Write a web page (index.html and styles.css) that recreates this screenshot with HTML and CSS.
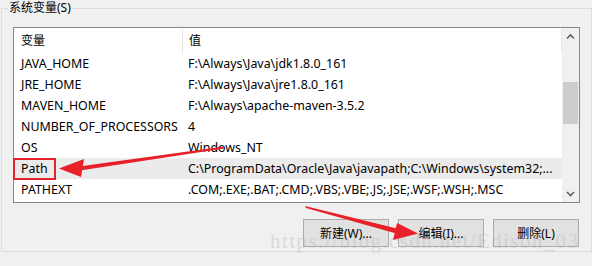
FILE: index.html
```html
<!DOCTYPE html>
<html lang="zh-CN">
<head>
    <meta charset="UTF-8">
    <meta name="viewport" content="width=device-width, initial-scale=1.0">
    <title>系统变量</title>
    <link rel="stylesheet" href="styles.css">
</head>
<body>
    <fieldset class="grupo">
        <legend>系统变量(S)</legend>
        <div class="lista">
            <div class="tabla">
                <div class="cabecera">
                    <div class="col-nombre">变量</div>
                    <div class="col-valor">值</div>
                </div>
                <div class="fila"><div class="col-nombre">JAVA_HOME</div><div class="col-valor">F:\Always\Java\jdk1.8.0_161</div></div>
                <div class="fila"><div class="col-nombre">JRE_HOME</div><div class="col-valor">F:\Always\Java\jre1.8.0_161</div></div>
                <div class="fila"><div class="col-nombre">MAVEN_HOME</div><div class="col-valor">F:\Always\apache-maven-3.5.2</div></div>
                <div class="fila"><div class="col-nombre">NUMBER_OF_PROCESSORS</div><div class="col-valor">4</div></div>
                <div class="fila"><div class="col-nombre">OS</div><div class="col-valor">Windows_NT</div></div>
                <div class="fila activa"><div class="col-nombre"><span class="marcado">Path</span></div><div class="col-valor">C:\ProgramData\Oracle\Java\javapath;C:\Windows\system32;...</div></div>
                <div class="fila"><div class="col-nombre">PATHEXT</div><div class="col-valor">.COM;.EXE;.BAT;.CMD;.VBS;.VBE;.JS;.JSE;.WSF;.WSH;.MSC</div></div>
            </div>
            <div class="scroll">
                <svg class="flecha" width="17" height="17" viewBox="0 0 17 17"><path d="M5 10.5 L8.5 7 L12 10.5" fill="none" stroke="#606060" stroke-width="1.6"/></svg>
                <div class="pista"><div class="pulgar"></div></div>
                <svg class="flecha" width="17" height="17" viewBox="0 0 17 17"><path d="M5 7 L8.5 10.5 L12 7" fill="none" stroke="#606060" stroke-width="1.6"/></svg>
            </div>
        </div>
        <div class="botones">
            <button>新建(W)...</button>
            <button>编辑(I)...</button>
            <button>删除(L)</button>
        </div>
    </fieldset>

    <div class="marca-agua">https://blog.csdn.net/Edison_03</div>

    <svg class="anotaciones" width="592" height="266" viewBox="0 0 592 266">
        <polygon points="224,146.5 224,148.5 80,170.5 79,166.5" fill="#e8202a"/>
        <polygon points="59,168.5 84,159 81,177" fill="#e8202a"/>
        <polygon points="305,206 306,208 398,234 399,229" fill="#e8202a"/>
        <polygon points="418,233.5 397,223 393,240" fill="#e8202a"/>
    </svg>
</body>
</html>
```

FILE: styles.css
```css
body {
    margin: 0;
    background-color: #f0f0f0;
    font-family: "Noto Sans", "Noto Sans CJK SC", sans-serif;
    font-size: 12px;
    color: #000;
    width: 592px;
    height: 266px;
    overflow: hidden;
}
.grupo {
    margin: 0 0 0 1px;
    padding: 11px 11px 0 11px;
    border: 1px solid #dcdcdc;
    width: 567px;
    height: 239px;
    box-sizing: content-box;
}
.grupo legend {
    margin-left: -5px;
    padding: 0 1px;
    line-height: 16px;
    height: 16px;
}
.lista {
    display: flex;
    width: 565px;
    height: 174px;
    border: 1px solid #828790;
    background-color: #fff;
}
.tabla {
    flex: 1;
    font-size: 12.4px;
}
.cabecera {
    display: flex;
    height: 25px;
    align-items: center;
    font-size: 12px;
}
.cabecera .col-nombre {
    border-right: 1px solid #e5e5e5;
    height: 24px;
    line-height: 24px;
}
.cabecera .col-valor {
    flex: 1;
    border-right: 1px solid #e5e5e5;
    height: 24px;
    line-height: 24px;
}
.fila {
    display: flex;
    height: 21px;
    line-height: 21px;
}
.col-nombre {
    width: 161px;
    padding-left: 7px;
    white-space: nowrap;
}
.col-valor {
    padding-left: 6px;
    white-space: nowrap;
}
.activa {
    background-color: #ebebeb;
}
.marcado {
    display: inline-block;
    margin-left: -8px;
    padding: 0 6px 0 6px;
    height: 18px;
    line-height: 18px;
    border: 2px solid #e5232b;
}
.scroll {
    width: 17px;
    background-color: #f0f0f0;
    display: flex;
    flex-direction: column;
}
.flecha {
    display: block;
    flex: none;
}
.pista {
    flex: 1;
    padding-top: 37px;
}
.pulgar {
    width: 15px;
    height: 42px;
    margin-left: 1px;
    background-color: #cdcdcd;
}
.botones {
    display: flex;
    justify-content: flex-end;
    gap: 9px;
    margin-top: 16px;
    width: 566px;
}
.botones button {
    width: 86px;
    height: 28px;
    background-color: #e1e1e1;
    border: 1px solid #adadad;
    font-family: "Noto Sans", "Noto Sans CJK SC", sans-serif;
    font-size: 12px;
    color: #000;
    padding: 0;
}
.marca-agua {
    position: absolute;
    left: 270px;
    top: 229px;
    font-family: "Liberation Serif", serif;
    font-size: 21px;
    letter-spacing: 1.4px;
    color: rgba(175, 175, 175, 0.35);
    white-space: nowrap;
}
.anotaciones {
    position: absolute;
    left: 0;
    top: 0;
    pointer-events: none;
}
```
